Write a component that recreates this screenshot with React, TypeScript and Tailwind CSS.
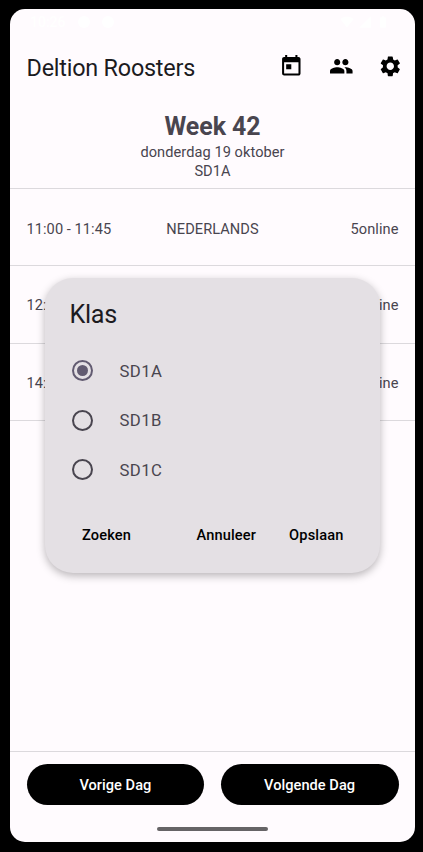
import { useState } from "react";
import { MdToday, MdPeople, MdSettings, MdSignalWifi4Bar, MdSignalCellular4Bar, MdBatteryFull } from "react-icons/md";

const lessons = [
  { time: "11:00 - 11:45", subject: "NEDERLANDS", room: "5online" },
  { time: "12:", subject: "", room: "5online" },
  { time: "14:", subject: "", room: "5online" },
];

const classes = ["SD1A", "SD1B", "SD1C"];

function StatusBar() {
  return (
    <div className="flex h-[33px] shrink-0 items-start justify-between pt-[6px] pr-[25px] pl-[20px] text-white">
      <div className="flex items-center gap-3 text-[14px] leading-none font-medium">
        <span>10:26</span>
        <span className="size-3 rounded-full bg-white" />
        <span className="size-3 rounded-full bg-white" />
      </div>
      <div className="flex items-center gap-1">
        <MdSignalWifi4Bar size={14} />
        <MdSignalCellular4Bar size={14} />
        <MdBatteryFull size={14} />
      </div>
    </div>
  );
}

function Radio({ checked }: { checked: boolean }) {
  return (
    <span
      className={`flex size-[21px] items-center justify-center rounded-full border-2 ${
        checked ? "border-[#625b71]" : "border-[#49454f]"
      }`}
    >
      {checked && <span className="size-[11px] rounded-full bg-[#625b71]" />}
    </span>
  );
}

export default function App() {
  const [selected, setSelected] = useState("SD1A");

  return (
    <div className="h-[852px] w-[423px] bg-black pt-[9px] pl-[10px] font-['Roboto',sans-serif]">
      <div className="relative flex h-[833px] w-[405px] flex-col overflow-hidden rounded-[15px] bg-[#fffbfe] text-[#49454f]">
        <StatusBar />

        <header className="flex h-[50px] shrink-0 items-center justify-between pr-[12.5px] pl-[16.5px]">
          <h1 className="pt-[4px] text-[23.4px] tracking-[-0.22px] text-[#1c1b1f]">Deltion Roosters</h1>
          <nav className="flex gap-[24.8px] pb-px text-black">
            <MdToday size={24.6} />
            <MdPeople size={24.6} />
            <MdSettings size={24.6} />
          </nav>
        </header>

        <section className="flex h-[97px] shrink-0 flex-col items-center border-b border-[#dcd9dd] pt-[18px]">
          <h2 className="text-[24.9px] leading-[34px] font-bold tracking-[-0.05px]">Week 42</h2>
          <p className="text-[14.6px] leading-[16px] tracking-[0.06px]">donderdag 19 oktober</p>
          <p className="text-[14.6px] leading-[22px] tracking-[0.06px]">SD1A</p>
        </section>

        <main className="flex-1">
          {lessons.map((l) => (
            <div
              key={l.time}
              className="grid h-[77.4px] grid-cols-3 items-center border-b border-[#dcd9dd] px-[16.5px] text-[14.6px] tracking-[0.06px] first:pt-[5px] not-first:pt-[3.6px]"
            >
              <span>{l.time}</span>
              <span className="text-center">{l.subject}</span>
              <span className="text-right">{l.room}</span>
            </div>
          ))}
        </main>

        <footer className="h-[91px] shrink-0 border-t border-[#dcd9dd] px-[16.5px] pt-[12px]">
          <div className="flex gap-[16.5px] text-[14.6px] font-medium tracking-[0.03px] text-white">
            <button className="h-[41px] flex-1 rounded-full bg-black pt-[2px]">Vorige Dag</button>
            <button className="h-[41px] flex-1 rounded-full bg-black pt-[2px]">Volgende Dag</button>
          </div>
          <div className="mx-auto mt-[22px] h-[4px] w-[111px] rounded-full bg-[#666466]" />
        </footer>

        <div
          role="dialog"
          className="absolute top-[269px] left-[35px] flex h-[295px] w-[335px] flex-col rounded-[28px] bg-[#e4e0e4] shadow-[0_3px_8px_rgba(0,0,0,0.28)]"
        >
          <h3 className="mt-[19px] ml-[24.5px] text-[25.2px] leading-[35px] tracking-[-0.3px] text-[#1c1b1f]">Klas</h3>
          <div className="mt-[14px] flex flex-col">
            {classes.map((c) => (
              <button
                key={c}
                onClick={() => setSelected(c)}
                className="flex h-[49.5px] items-center gap-[27px] pl-[26.5px] text-[16.7px] tracking-[0.4px]"
              >
                <Radio checked={selected === c} />
                <span className="pt-[1px]">{c}</span>
              </button>
            ))}
          </div>
          <div className="mt-[21px] flex h-[41px] items-center pr-[36.5px] pl-[37px] text-[14.6px] font-medium tracking-[0.15px] text-black">
            <button>Zoeken</button>
            <button className="ml-auto">Annuleer</button>
            <button className="ml-[33px]">Opslaan</button>
          </div>
        </div>
      </div>
    </div>
  );
}
